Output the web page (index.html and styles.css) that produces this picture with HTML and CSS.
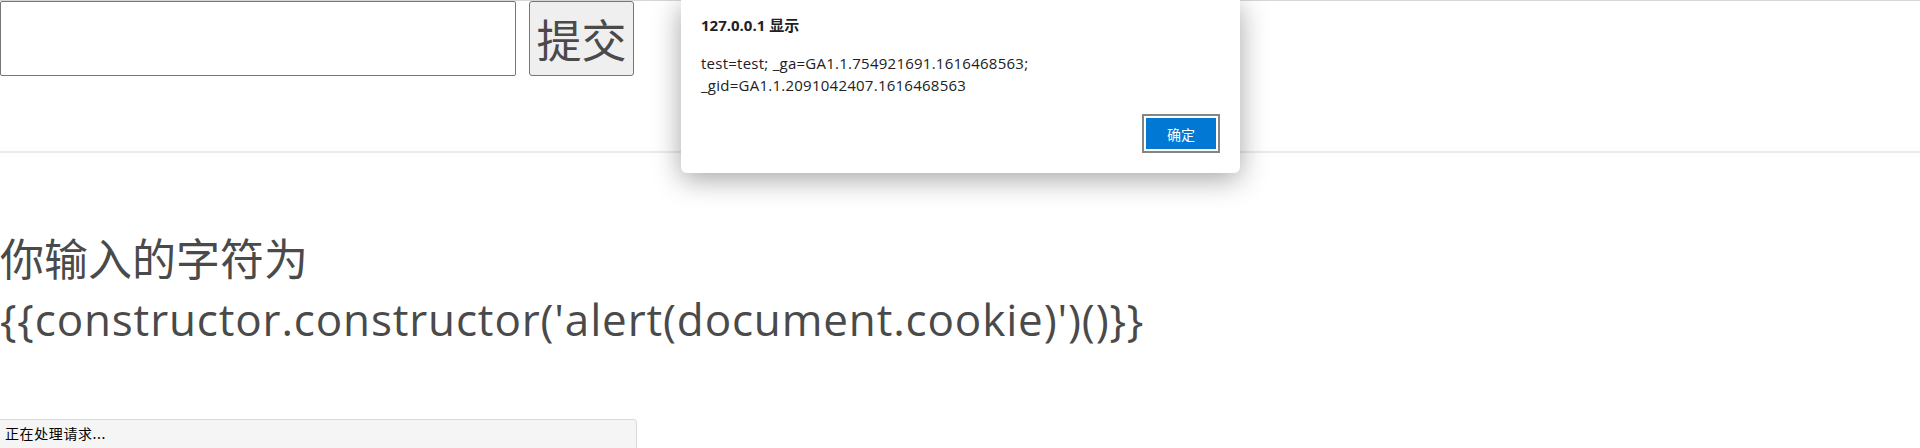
FILE: index.html
```html
<!DOCTYPE html>
<html lang="zh-CN">
<head>
<meta charset="utf-8">
<title>XSS</title>
<link rel="stylesheet" href="styles.css">
</head>
<body>
<div class="page">
  <form class="search">
    <input class="field" type="text">
    <button class="submit" type="button">提交</button>
  </form>
  <hr class="rule">
  <div class="result">
    <div class="result-label">你输入的字符为</div>
    <div class="result-value">{{constructor.constructor('alert(document.cookie)')()}}</div>
  </div>
</div>

<div class="dialog">
  <div class="dialog-title">127.0.0.1 显示</div>
  <div class="dialog-msg">test=test; _ga=GA1.1.754921691.1616468563; _gid=GA1.1.2091042407.1616468563</div>
  <div class="dialog-actions">
    <button class="dialog-ok" type="button">确定</button>
  </div>
</div>

<div class="status">正在处理请求...</div>
</body>
</html>
```
FILE: styles.css
```css
html, body {
  margin: 0;
  padding: 0;
  background: #ffffff;
  height: 448px;
  overflow: hidden;
}

body {
  font-family: "Open Sans", "Noto Sans CJK SC", sans-serif;
  color: #4a4a4a;
}

.page {
  border-top: 1px solid #d6d6d6;
}

.search {
  display: flex;
  gap: 13px;
  margin: 0;
  height: 75px;
}

.field {
  box-sizing: border-box;
  width: 516px;
  height: 75px;
  margin: 0;
  border: 1px solid #767676;
  border-radius: 2px;
  background: #fff;
}

.submit {
  box-sizing: border-box;
  width: 105px;
  height: 75px;
  margin: 0;
  padding: 0;
  border: 1px solid #767676;
  border-radius: 3px;
  background: #efefef;
  color: #4a4a4a;
  font-family: "Noto Sans CJK SC", sans-serif;
  font-size: 45px;
  line-height: 1;
}

.rule {
  margin: 75px 0 0 0;
  border: 0;
  height: 2px;
  background: #ebebeb;
}

.result {
  margin-top: 76px;
  font-size: 44px;
  line-height: 60px;
}

.result-value {
  letter-spacing: 0.85px;
}

.dialog {
  position: absolute;
  left: 681px;
  top: 0;
  width: 559px;
  height: 173px;
  box-sizing: border-box;
  padding: 13px 20px 20px 20px;
  background: #fff;
  border-radius: 0 0 6px 6px;
  box-shadow: 0 6px 28px rgba(0, 0, 0, 0.36);
  font-family: "Open Sans", "Noto Sans CJK SC", sans-serif;
  color: #202124;
  display: flex;
  flex-direction: column;
}

.dialog-title {
  font-size: 15px;
  font-weight: 700;
  line-height: 24px;
}

.dialog-msg {
  margin-top: 15px;
  font-size: 15px;
  letter-spacing: 0.25px;
  line-height: 22px;
}

.dialog-actions {
  margin-top: auto;
  display: flex;
  justify-content: flex-end;
  padding-right: 2px;
  padding-bottom: 2px;
}

.dialog-ok {
  box-sizing: border-box;
  width: 74px;
  height: 35px;
  margin: 0;
  padding: 0;
  background: #0078d4;
  border: 2px solid #ffffff;
  outline: 2px solid #858585;
  color: #ffffff;
  font-family: "Noto Sans CJK SC", sans-serif;
  font-size: 14px;
}

.status {
  position: absolute;
  left: 0;
  top: 419px;
  width: 637px;
  height: 30px;
  box-sizing: border-box;
  padding: 4px 5px 0 5px;
  background: #f5f5f5;
  border: 1px solid #dadada;
  border-left: 0;
  border-radius: 0 4px 0 0;
  font-family: "Noto Sans CJK SC", sans-serif;
  font-size: 14px;
  letter-spacing: 0.6px;
  line-height: 18px;
  color: #000;
}
```
